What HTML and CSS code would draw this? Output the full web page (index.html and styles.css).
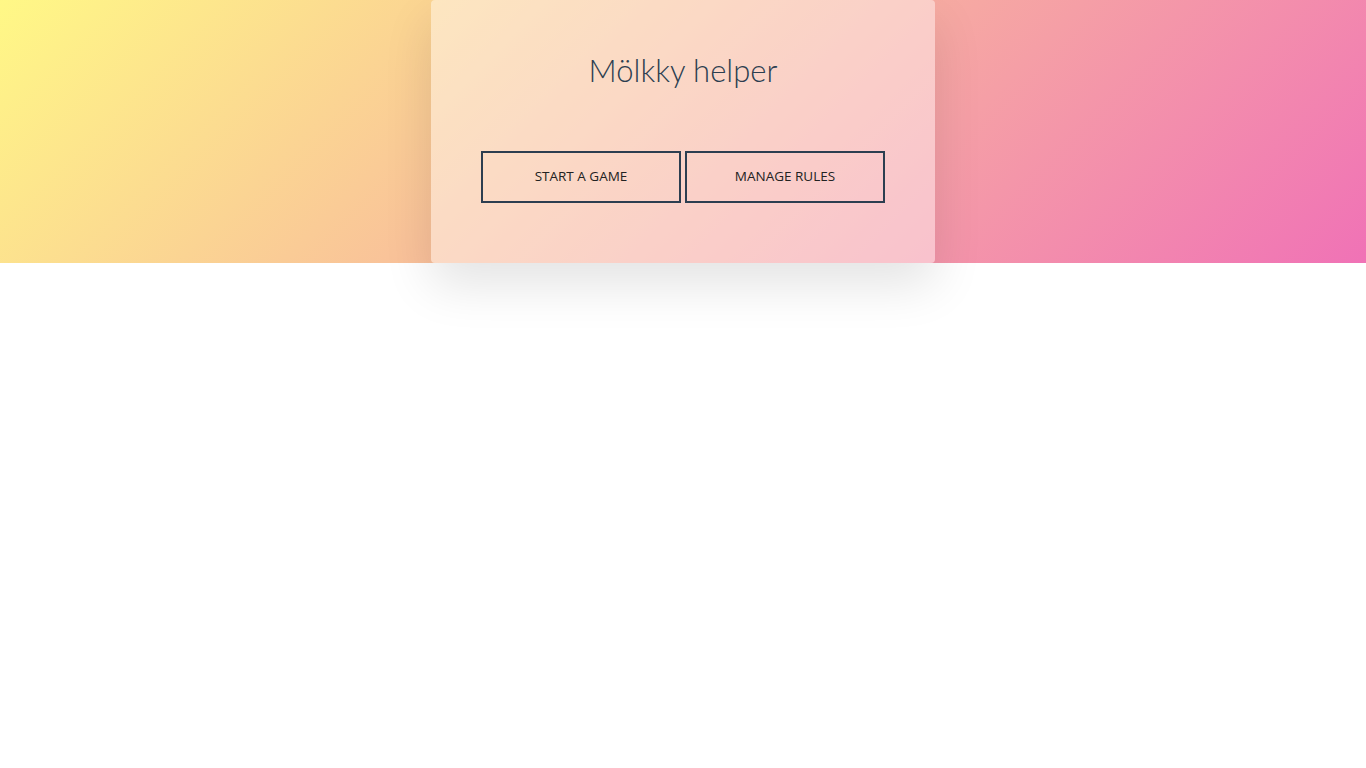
FILE: index.html
```html
<!DOCTYPE html>
<html lang="en">
<head>
  <meta charset="UTF-8" />
  <meta name="viewport" content="width=device-width, initial-scale=1.0"/>
  <title>Mölkky helper</title>
  <link rel="stylesheet" href="styles.css">
</head>
<body>
  <header class="hero">
    <div class="card">
      <h1>Mölkky helper</h1>
      <div class="actions">
        <button class="btn">Start a game</button>
        <button class="btn">Manage rules</button>
      </div>
    </div>
  </header>
  <main class="content"></main>
</body>
</html>
```

FILE: styles.css
```css
body {
  margin: 0;
  padding: 0;
  min-height: 100vh;
  background: #fff;
  font-family: "Open Sans", "Noto Sans", sans-serif;
  color: #2c3e50;
}

/* gradient band on top */
.hero {
  height: 263px;
  background: linear-gradient(135deg, #fff886 0%, #f072b6 100%);
  display: flex;
  justify-content: center;
  position: relative;
  z-index: 1;
}

.content {
  height: 505px;
}

.card {
  width: 504px;
  box-sizing: border-box;
  padding: 50px 50px 60px;
  background: rgba(255, 255, 255, 0.42);
  border-radius: 4px;
  box-shadow: 0 22px 50px rgba(0, 0, 0, 0.11);
  text-align: center;
}

h1 {
  margin: 0 0 61px;
  font-family: Lato, "Open Sans", sans-serif;
  font-weight: 300;
  font-size: 31px;
  line-height: 40px;
  color: #2c3e50;
}

.actions {
  display: flex;
  gap: 4px;
}

.btn {
  width: 200px;
  height: 52px;
  padding: 0 0 2px;
  background: transparent;
  border: 2px solid #2c3e50;
  font-family: "Open Sans", sans-serif;
  font-size: 13.5px;
  text-transform: uppercase;
  color: #222;
  cursor: pointer;
}
```
